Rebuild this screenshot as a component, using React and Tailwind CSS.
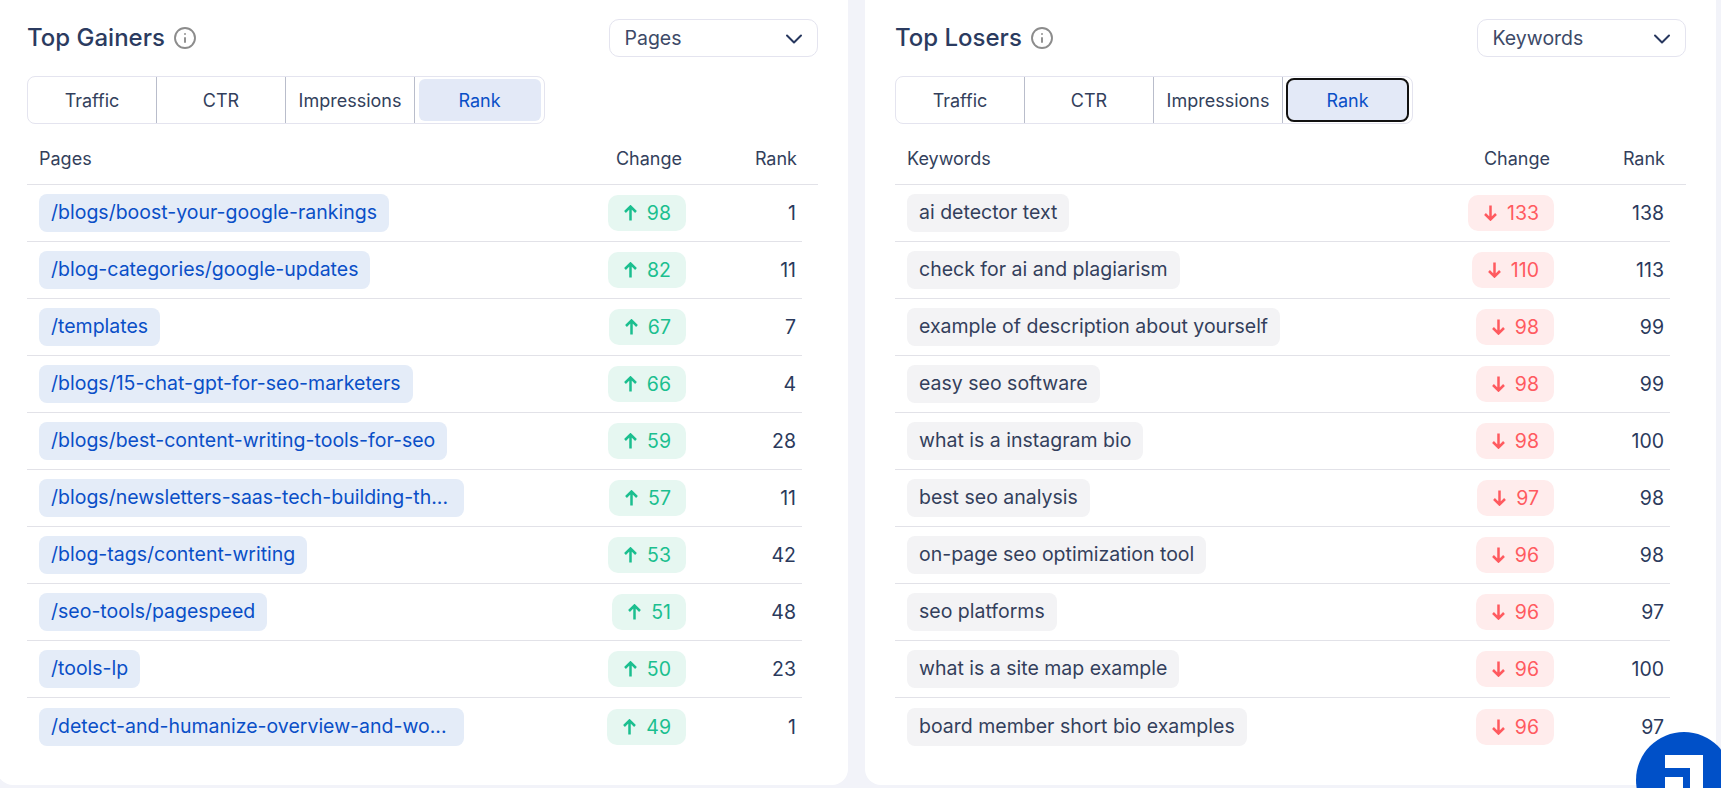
import { ChevronDown, Info } from 'lucide-react';

const gainers = [
  { label: '/blogs/boost-your-google-rankings', change: 98, rank: 1 },
  { label: '/blog-categories/google-updates', change: 82, rank: 11 },
  { label: '/templates', change: 67, rank: 7 },
  { label: '/blogs/15-chat-gpt-for-seo-marketers', change: 66, rank: 4 },
  { label: '/blogs/best-content-writing-tools-for-seo', change: 59, rank: 28 },
  { label: '/blogs/newsletters-saas-tech-building-th...', change: 57, rank: 11, cut: true },
  { label: '/blog-tags/content-writing', change: 53, rank: 42 },
  { label: '/seo-tools/pagespeed', change: 51, rank: 48 },
  { label: '/tools-lp', change: 50, rank: 23 },
  { label: '/detect-and-humanize-overview-and-wo...', change: 49, rank: 1, cut: true },
];

const losers = [
  { label: 'ai detector text', change: 133, rank: 138 },
  { label: 'check for ai and plagiarism', change: 110, rank: 113 },
  { label: 'example of description about yourself', change: 98, rank: 99 },
  { label: 'easy seo software', change: 98, rank: 99 },
  { label: 'what is a instagram bio', change: 98, rank: 100 },
  { label: 'best seo analysis', change: 97, rank: 98 },
  { label: 'on-page seo optimization tool', change: 96, rank: 98 },
  { label: 'seo platforms', change: 96, rank: 97 },
  { label: 'what is a site map example', change: 96, rank: 100 },
  { label: 'board member short bio examples', change: 96, rank: 97 },
];

function Arrow({ up }) {
  return (
    <svg width="13" height="16" viewBox="0 0 13 16" fill="none" stroke="currentColor" strokeWidth="2.5" className={up ? '' : 'rotate-180'}>
      <path d="M6.5 15.5V1.5M1 7l5.5-5.5L12 7" />
    </svg>
  );
}

function Tabs({ focused }) {
  const tabs = ['Traffic', 'CTR', 'Impressions'];
  return (
    <div className="flex h-[48px] w-[518px] rounded-lg border border-[#e4e4ef] text-[18px] text-[#333f5c]">
      {tabs.map((t) => (
        <div key={t} className="flex w-[129px] items-center justify-center border-r border-[#b9bdcb] pt-[1px]">
          {t}
        </div>
      ))}
      <div className="flex flex-1 items-center justify-center">
        <div
          className={`flex items-center justify-center rounded-md bg-[#e3e9f7] pt-[1px] text-[#0a4fc7] ${
            focused ? 'h-[40px] w-[119px] outline-[2.5px] outline-[#111111]' : 'h-[42px] w-[122px]'
          }`}
        >
          Rank
        </div>
      </div>
    </div>
  );
}

function Panel({ title, picker, column, rows, up, focused }) {
  const chipColor = up ? 'bg-[#e4ecf8] text-[#0a4fc7]' : 'bg-[#f3f3f5] text-[#333f5c]';
  const changeColor = up ? 'bg-[#e6f7f1] text-[#1bbf8f]' : 'bg-[#ffecec] text-[#ff5a5f]';

  return (
    <div className="h-[785px] w-[851px] shrink-0 rounded-b-2xl bg-white pl-[30px] pr-[30px] pt-[19px]">
      <div className="flex h-[38px] items-center justify-between">
        <div className="flex items-center gap-[8px]">
          <h2 className="text-[24px] font-medium text-[#2b3b60]">{title}</h2>
          <Info size={24} strokeWidth={1.9} className="text-[#8c8c8c]" />
        </div>
        <div className="flex h-[38px] w-[209.5px] items-center justify-between rounded-[10px] border border-[#e4e4ef] pl-[15px] pr-[9.5px] pt-[1px] text-[19.5px] text-[#3d4a68]">
          {picker}
          <ChevronDown size={28} strokeWidth={1.7} className="text-[#27375e]" />
        </div>
      </div>

      <div className="mt-[19px]">
        <Tabs focused={focused} />
      </div>

      <div className="mt-[12px] flex h-[49px] items-center border-b border-[#e2e2e8] pb-[4px] pl-3 pr-[21px] text-[18px] text-[#333f5c]">
        <span className="flex-1">{column}</span>
        <span className="pr-[5px]">Change</span>
        <span className="w-[110px] text-right">Rank</span>
      </div>

      <div className="w-[775px]">
        {rows.map((row) => (
          <div key={row.label} className="flex h-[57px] items-center border-b border-[#e2e2e8] pl-3 pr-[6px] last:border-b-0">
            <div className="flex-1 min-w-0">
              <span
                className={`inline-block h-[38px] rounded-lg px-3 align-middle text-[19.5px] leading-[37px] ${chipColor} ${
                  row.cut ? 'w-[425px]' : ''
                }`}
              >
                {row.label}
              </span>
            </div>
            <span className={`flex h-[36px] items-center gap-[10px] rounded-[10px] pl-[16px] pr-[15px] text-[19.5px] ${changeColor}`}>
              <Arrow up={up} />
              <span className="pt-[2px]">{row.change}</span>
            </span>
            <span className="w-[110px] pt-[2px] text-right text-[19.5px] text-[#2b3a5c]">{row.rank}</span>
          </div>
        ))}
      </div>
    </div>
  );
}

export default function App() {
  return (
    <div className="relative flex h-[788px] w-full gap-[17px] overflow-hidden bg-[#f2f3f9] font-[Inter,sans-serif]">
      <div className="-ml-[3px] shrink-0">
        <Panel title="Top Gainers" picker="Pages" column="Pages" rows={gainers} up />
      </div>
      <Panel title="Top Losers" picker="Keywords" column="Keywords" rows={losers} focused />

      <div className="absolute left-[1636px] top-[732px] h-[96px] w-[96px] rounded-full bg-[#0050c8]">
        <svg width="40" height="40" viewBox="0 0 40 40" fill="#ffffff" className="absolute left-[29px] top-[23px]">
          <path d="M0 0h38v40H25V13H0z" />
          <path d="M0 22h18v18H0z" />
        </svg>
      </div>
    </div>
  );
}
